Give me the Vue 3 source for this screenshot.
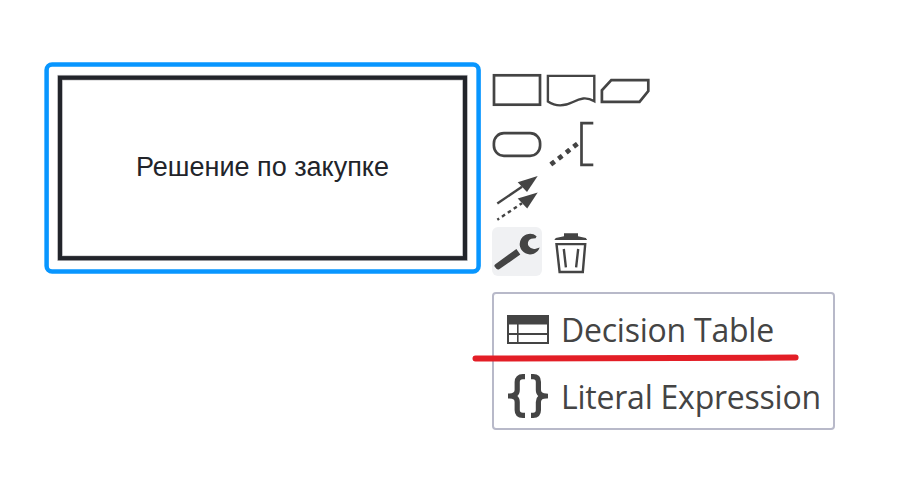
<script setup>
const label = 'Решение по закупке'
const dots = [[6.7, 44], [14.3, 38.2], [22, 32.1], [29.5, 26.2]]
</script>

<template>
  <main class="canvas">
    <div class="node">
      <svg class="frame" viewBox="0 0 438 213">
        <rect class="selection" x="2.6" y="2.6" width="432" height="207" rx="5.5" />
        <rect class="halo" x="16" y="15.7" width="405" height="180.5" />
        <rect class="shape" x="16" y="15.7" width="405" height="180.5" />
      </svg>
      <span class="label">{{ label }}</span>
    </div>

    <div class="pad">
      <div class="row">
        <svg class="entry" viewBox="0 0 50 50"><rect x="2" y="10.3" width="46" height="29.4" /></svg>
        <svg class="entry" viewBox="0 0 50 50"><path d="M1.9 10.9H48.3V36.1C40 31.5 34 33.5 27 37C18 41.5 10 42 1.9 36.5Z" class="thin" /></svg>
        <svg class="entry" viewBox="0 0 50 50"><path d="M11.3 15.2H48.3V26L39.5 36.9H1.9V25.3Z" /></svg>
      </div>
      <div class="row">
        <svg class="entry" viewBox="0 0 50 50"><rect x="1.9" y="14.2" width="46.2" height="22.6" rx="10" /></svg>
        <svg class="entry" viewBox="0 0 50 50">
          <path d="M47.3 4.2H35.5V45.8H47.3" />
          <rect v-for="d in dots" :key="d[0]" class="solid" x="-2.4" y="-2.4" width="4.8" height="4.8" rx="0.5" :transform="`translate(${d[0]} ${d[1]}) rotate(-38)`" />
        </svg>
      </div>
      <div class="row">
        <svg class="entry" viewBox="0 0 50 50">
          <path class="thin" d="M5.3 30.4L30 13.8" />
          <path class="solid" d="M45.7 3L25.7 9.3L35 19Z" />
          <path class="thin" stroke-dasharray="3.7 3.4" stroke-dashoffset="1.5" d="M5.3 46.8L30 30.2" />
          <path class="solid" d="M45.7 19.4L25.7 25.5L35.2 35.5Z" />
        </svg>
      </div>
      <div class="row">
        <svg class="entry active" viewBox="0 0 50 49">
          <path class="solid" d="M3.3 37.2L24.4 21.9L28.3 27.6L7.2 42.3Q5.7 43.1 4.4 41.8L2.6 39.6Q1.9 38.2 3.3 37.2Z" />
          <path class="solid" d="M44.6 9.2L43.6 11.3Q38.4 11.3 36.8 13.6Q35 16.5 36.8 19.3Q39 22.4 43 21.9L47.7 20.6A10.3 10.3 0 1 1 44.6 9.2Z" />
        </svg>
        <svg class="entry" viewBox="0 0 50 50">
          <path class="solid" d="M8.3 12.9L9.8 11L18 9.2V6.2H32V9.2L39.8 11L41.2 12.9Z" />
          <path class="thin" d="M10.5 17.1H39.2L36.8 45H13.6Z" />
          <path class="thin" d="M17.8 22L19.9 40.3M32.2 22L30.1 40.3" />
        </svg>
      </div>
    </div>

    <div class="menu">
      <div class="item">
        <svg class="glyph" viewBox="0 0 42 44">
          <path class="solid" d="M0 7.5H42V36.5H0ZM2 17V25.5H10V17ZM11.6 17V25.5H40V17ZM2 27.5V34.5H10V27.5ZM11.6 27.5V34.5H40V27.5Z" transform="translate(0 0.5)" fill-rule="evenodd" />
        </svg>
        <span class="text">Decision Table</span>
      </div>
      <div class="item">
        <svg class="glyph braces" viewBox="1 0 40 44">
          <path d="M18 2.7H15.8Q10.2 2.7 10.2 8V16Q10.2 22 2.3 22Q10.2 22 10.2 28V36Q10.2 41.3 15.8 41.3H18" />
          <path d="M24 2.7H26.2Q31.4 2.7 31.4 8V16Q31.4 22 39.3 22Q31.4 22 31.4 28V36Q31.4 41.3 26.2 41.3H24" />
        </svg>
        <span class="text">Literal Expression</span>
      </div>
    </div>
    <svg class="mark" viewBox="0 0 330 12"><path d="M5.5 6.5L325.6 5.6" /></svg>
  </main>
</template>

<style>
body { background: #fff; }
</style>

<style scoped>
.canvas { position: relative; width: 903px; height: 482px; overflow: hidden; background: #fff; }
.node { position: absolute; left: 44px; top: 62px; box-sizing: border-box; width: 438px; height: 213px; padding: 0 1px 4px 0; display: flex; align-items: center; justify-content: center; }
.frame { position: absolute; inset: 0; width: 438px; height: 213px; fill: none; }
.selection { stroke: #0896ff; stroke-width: 4.5; }
.halo { stroke: #c6c6c8; stroke-width: 5.6; }
.shape { stroke: #22242a; stroke-width: 4.2; }
.label { font: 27px/32px "Liberation Sans", Arial, sans-serif; color: #22242a; white-space: nowrap; }
.pad { position: absolute; left: 492px; top: 65px; display: flex; flex-direction: column; gap: 4px; }
.row { display: flex; gap: 4px; }
.entry { display: block; width: 50px; height: 50px; fill: none; stroke: #444; stroke-width: 2.7; border-radius: 6px; }
.thin { stroke-width: 2.4; }
.solid { fill: #444; stroke: none; }
.active { background: #f0f1f3; height: 49px; }
.menu { position: absolute; left: 492px; top: 292px; box-sizing: border-box; width: 343px; height: 138px; border: 2px solid #b8b9c9; border-radius: 4px; background: #fff; padding: 1px 0 0 13px; }
.item { display: flex; align-items: center; gap: 12px; height: 67px; }
.glyph { width: 42px; height: 44px; flex: none; }
.braces { width: 40px; margin: 0 1px; fill: none; stroke: #444; stroke-width: 5.2; stroke-linejoin: round; }
.text { font: 32px/44px "Open Sans", sans-serif; letter-spacing: -0.23px; color: #444; white-space: nowrap; padding-top: 3px; }
.mark { position: absolute; left: 470px; top: 352px; width: 330px; height: 12px; fill: none; stroke: #e31e26; stroke-width: 6; stroke-linecap: round; }
</style>
